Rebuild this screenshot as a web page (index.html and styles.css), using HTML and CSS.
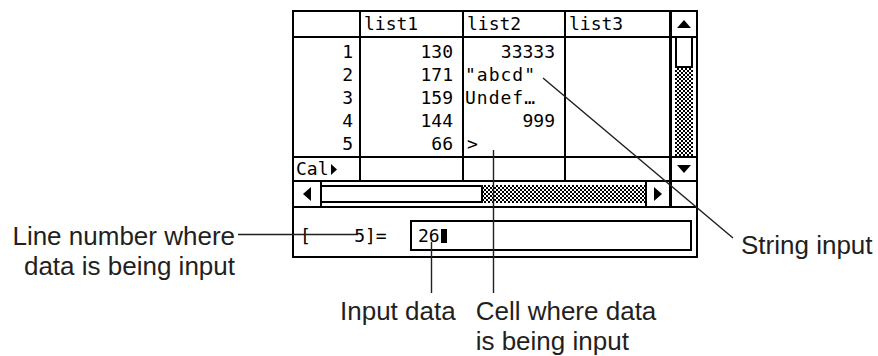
FILE: index.html
```html
<!DOCTYPE html>
<html lang="en">
<head>
  <meta charset="UTF-8">
  <meta name="viewport" content="width=device-width, initial-scale=1.0">
  <title>List Editor - data input</title>
  <link rel="stylesheet" href="styles.css">
</head>
<body>
  <div class="figure">
    <p class="label label-left">Line number where<br>data is being input</p>

    <div class="screen">
      <div class="sheet">
        <div class="cell head"></div>
        <div class="cell head">list1</div>
        <div class="cell head">list2</div>
        <div class="cell head">list3</div>

        <div class="vscroll">
          <div class="arrow-box arrow-up">
            <svg width="14" height="8" viewBox="0 0 14 8"><polygon points="7,0 14,8 0,8"/></svg>
          </div>
          <div class="vthumb"></div>
          <div class="vtrack"></div>
          <div class="arrow-box arrow-down">
            <svg width="14" height="8" viewBox="0 0 14 8"><polygon points="0,0 14,0 7,8"/></svg>
          </div>
        </div>

        <div class="cell body num idx">
          <div>1</div><div>2</div><div>3</div><div>4</div><div>5</div>
        </div>
        <div class="cell body num">
          <div>130</div><div>171</div><div>159</div><div>144</div><div>66</div>
        </div>
        <div class="cell body mixed">
          <div class="r">33333</div>
          <div class="l">"abcd"</div>
          <div class="l">Undef…</div>
          <div class="r">999</div>
          <div class="l mark">&gt;</div>
        </div>
        <div class="cell body"></div>

        <div class="cell cal">Cal<svg width="6" height="11" viewBox="0 0 6 11"><polygon points="0,0 6,5.5 0,11"/></svg></div>
        <div class="cell cal"></div>
        <div class="cell cal"></div>
        <div class="cell cal"></div>
      </div>

      <div class="hscroll">
        <div class="arrow-box arrow-l">
          <svg width="8" height="14" viewBox="0 0 8 14"><polygon points="8,0 8,14 0,7"/></svg>
        </div>
        <div class="htrack"><div class="hthumb"></div></div>
        <div class="arrow-box arrow-r">
          <svg width="8" height="14" viewBox="0 0 8 14"><polygon points="0,0 8,7 0,14"/></svg>
        </div>
        <div class="corner"></div>
      </div>

      <div class="entry">
        <span class="line-no">[    5]=</span>
        <div class="entry-box">26<span class="cursor"></span></div>
      </div>
    </div>

    <p class="label label-right">String input</p>

    <div class="notes">
      <p class="label">Input data</p>
      <p class="label">Cell where data<br>is being input</p>
    </div>

    <svg class="leaders" width="878" height="356" viewBox="0 0 878 356">
      <line x1="238" y1="234.5" x2="358" y2="234.5"/>
      <line x1="431.5" y1="242" x2="431.5" y2="293"/>
      <line x1="493.5" y1="150" x2="493.5" y2="293"/>
      <line x1="543" y1="78" x2="733" y2="238"/>
    </svg>
  </div>
</body>
</html>
```

FILE: styles.css
```css
body {
    margin: 0;
    background-color: #ffffff;
}

.figure {
    position: relative;
    width: 878px;
    height: 356px;
    box-sizing: border-box;
    padding-top: 10px;
    display: grid;
    grid-template-columns: 292px 406px 1fr;
    grid-template-rows: 248px 1fr;
    font-family: "Liberation Sans", Arial, sans-serif;
    color: #231f20;
}

.label {
    margin: 0;
    font-size: 26px;
    line-height: 30px;
    white-space: nowrap;
}

.label-left {
    grid-column: 1;
    grid-row: 1;
    align-self: start;
    margin-top: 211px;
    padding-right: 57px;
    text-align: right;
}

.label-right {
    grid-column: 3;
    grid-row: 1;
    align-self: start;
    margin-top: 220px;
    padding-left: 43px;
}

.notes {
    grid-column: 1 / -1;
    grid-row: 2;
    align-self: start;
    display: flex;
    gap: 20px;
    margin-top: 38px;
    padding-left: 340px;
}

/* calculator screen */
.screen {
    grid-column: 2;
    grid-row: 1;
    border: 2px solid #000;
    box-sizing: border-box;
    font-family: "DejaVu Sans Mono", monospace;
    font-size: 18px;
    color: #000;
    background-color: #fff;
}

.sheet {
    display: grid;
    grid-template-columns: 67px 103px 102px 103px 27px;
    grid-template-rows: 26px 120px 24px;
}

.cell {
    box-sizing: border-box;
    border-right: 2px solid #000;
    border-bottom: 2px solid #000;
}

.cell:nth-child(4),
.cell:nth-child(9),
.cell:nth-child(13) {
    border-right: none;
}

.head {
    line-height: 24px;
    padding-left: 3px;
}

.body {
    padding-top: 2px;
    line-height: 23px;
}

.num {
    text-align: right;
    padding-right: 9px;
}

.idx {
    padding-right: 6px;
}

.mixed .r {
    text-align: right;
    padding-right: 9px;
}

.mixed .l {
    padding-left: 1px;
    letter-spacing: 1px;
}

.mixed .mark {
    padding-left: 3px;
}

.cal {
    display: flex;
    align-items: center;
    gap: 2px;
    padding-left: 2px;
    line-height: 22px;
}

.vscroll {
    grid-column: 5;
    grid-row: 1 / 4;
    box-sizing: border-box;
    border-left: 3px solid #000;
    border-bottom: 2px solid #000;
    display: flex;
    flex-direction: column;
}

.arrow-box {
    display: flex;
    align-items: center;
    justify-content: center;
    box-sizing: border-box;
}

.arrow-up {
    height: 26px;
    border-bottom: 2px solid #000;
}

.arrow-down {
    height: 24px;
    border-top: 2px solid #000;
}

.vthumb {
    height: 30px;
    margin: 0 3px;
    box-sizing: border-box;
    border: 2px solid #000;
    border-top: none;
}

.vtrack {
    flex: 1;
    margin: 0 3px;
    background: repeating-conic-gradient(#000 0 25%, #fff 0 50%) 0 0 / 4px 4px;
}

.hscroll {
    display: flex;
    height: 26px;
    box-sizing: border-box;
    border-bottom: 2px solid #000;
}

.arrow-l {
    width: 28px;
    border-right: 2px solid #000;
}

.htrack {
    flex: 1;
    margin: 3px 0;
    display: flex;
    background: repeating-conic-gradient(#000 0 25%, #fff 0 50%) 0 0 / 4px 4px;
}

.hthumb {
    width: 161px;
    box-sizing: border-box;
    border: 2px solid #000;
    border-left: none;
    background-color: #fff;
}

.arrow-r {
    width: 24px;
    border-left: 2px solid #000;
}

.corner {
    width: 27px;
    box-sizing: border-box;
    border-left: 3px solid #000;
}

.entry {
    display: flex;
    align-items: flex-end;
    height: 48px;
    box-sizing: border-box;
    padding: 0 4px 5px 6px;
}

.line-no {
    white-space: pre;
    line-height: 31px;
    flex: 1;
}

.entry-box {
    width: 282px;
    height: 31px;
    box-sizing: border-box;
    border: 2px solid #000;
    padding-left: 6px;
    line-height: 27px;
    display: flex;
    align-items: center;
}

.cursor {
    display: inline-block;
    width: 6px;
    height: 14px;
    background-color: #000;
    margin-left: 1px;
}

.leaders {
    position: absolute;
    top: 0;
    left: 0;
    pointer-events: none;
}

.leaders line {
    stroke: #231f20;
    stroke-width: 1.4;
}
```
